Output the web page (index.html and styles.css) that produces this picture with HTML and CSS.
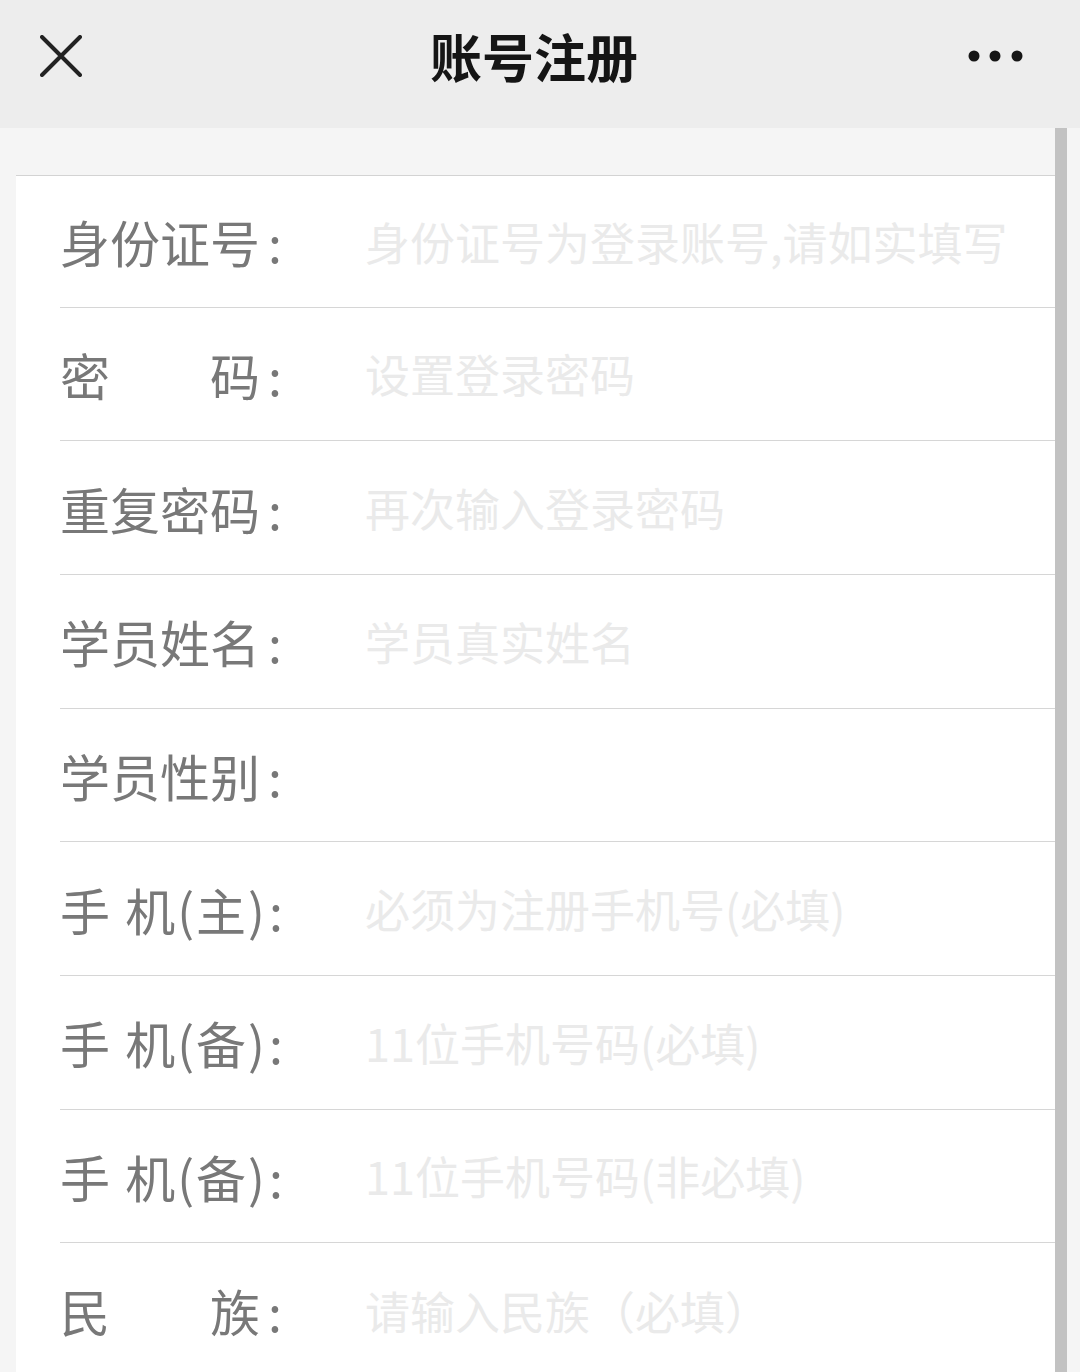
FILE: index.html
```html
<!DOCTYPE html>
<html lang="zh-CN">
<head>
<meta charset="utf-8">
<title>账号注册</title>
<link rel="stylesheet" href="styles.css">
</head>
<body>
<header class="topbar">
  <div class="left">
    <svg class="close" width="42" height="42" viewBox="0 0 42 42" aria-label="关闭">
      <path d="M2 2 L40 40 M40 2 L2 40" stroke="#222" stroke-width="4" stroke-linecap="round" fill="none"/>
    </svg>
  </div>
  <h1 class="title">账号注册</h1>
  <div class="right">
    <svg class="more" width="60" height="12" viewBox="0 0 60 12" aria-label="更多">
      <circle cx="6" cy="6" r="5.5" fill="#161616"/>
      <circle cx="27" cy="6" r="5.5" fill="#161616"/>
      <circle cx="49" cy="6" r="5.5" fill="#161616"/>
    </svg>
  </div>
</header>
<main class="page">
  <section class="card">
    <div class="row first">
      <label class="label"><span>身份证号<span class="colon">:</span></span></label>
      <input class="field" type="text" placeholder="身份证号为登录账号,请如实填写">
    </div>
    <div class="row">
      <label class="label"><span>密</span><span>码<span class="colon">:</span></span></label>
      <input class="field" type="password" placeholder="设置登录密码">
    </div>
    <div class="row">
      <label class="label"><span>重复密码<span class="colon">:</span></span></label>
      <input class="field" type="password" placeholder="再次输入登录密码">
    </div>
    <div class="row">
      <label class="label"><span>学员姓名<span class="colon">:</span></span></label>
      <input class="field" type="text" placeholder="学员真实姓名">
    </div>
    <div class="row">
      <label class="label"><span>学员性别<span class="colon">:</span></span></label>
      <div class="field"></div>
    </div>
    <div class="row">
      <label class="label phone"><span>手 机(主)<span class="colon">:</span></span></label>
      <input class="field" type="text" placeholder="必须为注册手机号(必填)">
    </div>
    <div class="row">
      <label class="label phone"><span>手 机(备)<span class="colon">:</span></span></label>
      <input class="field" type="text" placeholder="11位手机号码(必填)">
    </div>
    <div class="row">
      <label class="label phone"><span>手 机(备)<span class="colon">:</span></span></label>
      <input class="field" type="text" placeholder="11位手机号码(非必填)">
    </div>
    <div class="row last">
      <label class="label"><span>民</span><span>族<span class="colon">:</span></span></label>
      <input class="field" type="text" placeholder="请输入民族（必填）">
    </div>
  </section>
  <div class="scrollbar"></div>
</main>
</body>
</html>
```

FILE: styles.css
```css
* { box-sizing: border-box; }

html, body {
  margin: 0;
  padding: 0;
  background: #f5f5f5;
  font-family: "Noto Sans CJK SC", "Noto Sans", "Liberation Sans", sans-serif;
  overflow: hidden;
}

.topbar {
  height: 128px;
  background: #ededed;
  display: grid;
  grid-template-columns: 1fr auto 1fr;
  align-items: center;
  padding: 0 52px 16px 40px;
}

.topbar .left { display: flex; justify-content: flex-start; }
.topbar .right { display: flex; justify-content: flex-end; }

.close { display: block; }
.more { display: block; }

.title {
  margin: 0;
  font-size: 52px;
  font-weight: 700;
  color: #151515;
  line-height: 1;
}

.page {
  display: flex;
  padding: 47px 13px 0 16px;
  height: 1244px;
}

.card {
  flex: 1;
  background: #ffffff;
  border-top: 1px solid #d3d3d3;
}

.scrollbar {
  width: 12px;
  background: #c2c2c2;
  margin-top: -47px;
}

.row {
  height: 133.7px;
  margin-left: 44px;
  border-bottom: 1px solid #d6d6d6;
  display: flex;
  align-items: center;
}

.row.first { height: 131.5px; }
.row.last { border-bottom: none; }

.label {
  width: 222px;
  margin-right: 83px;
  display: flex;
  justify-content: space-between;
  font-size: 50px;
  color: #787878;
  white-space: pre;
  line-height: 1;
}

.colon {
  margin-left: 8px;
}

.label.phone {
  letter-spacing: 2px;
  word-spacing: 0;
}

.label.phone .colon {
  margin-left: 2px;
}

.field {
  flex: 1;
  min-width: 0;
  border: none;
  outline: none;
  background: transparent;
  padding: 0;
  margin: 0;
  font-family: inherit;
  font-size: 45px;
  color: #333;
  height: 60px;
}

.field::placeholder {
  color: #eaeaea;
}
```
